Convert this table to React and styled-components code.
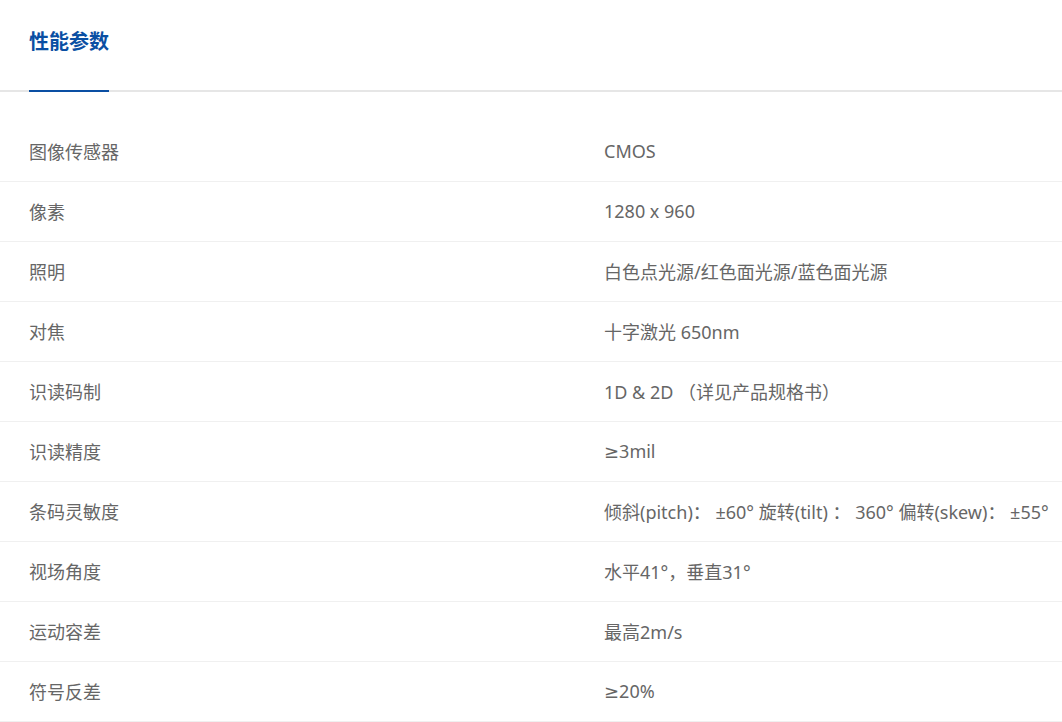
import styled, { createGlobalStyle } from "styled-components";

const GlobalStyle = createGlobalStyle`
  body {
    margin: 0;
    background: #fff;
    font-family: "Noto Sans", "DejaVu Sans", "Noto Sans CJK SC", sans-serif;
  }
`;

const specs = [
  ["图像传感器", "CMOS"],
  ["像素", "1280 x 960"],
  ["照明", "白色点光源/红色面光源/蓝色面光源"],
  ["对焦", "十字激光 650nm"],
  ["识读码制", "1D & 2D （详见产品规格书）"],
  ["识读精度", "≥3mil"],
  ["条码灵敏度", "倾斜(pitch)： ±60° 旋转(tilt) ： 360° 偏转(skew)： ±55°"],
  ["视场角度", "水平41°，垂直31°"],
  ["运动容差", "最高2m/s"],
  ["符号反差", "≥20%"],
];

const App = () => {
  return (
    <Page>
      <GlobalStyle />
      <TabBar>
        <Tab>性能参数</Tab>
      </TabBar>
      <Table>
        {specs.map(([name, value]) => (
          <Row key={name}>
            <Cell>{name}</Cell>
            <Cell>{value}</Cell>
          </Row>
        ))}
      </Table>
    </Page>
  );
};

const Page = styled.div`
  width: 1062px;
  overflow: hidden;
`;

const TabBar = styled.div`
  display: flex;
  padding: 0 29px;
  height: 90px;
  border-bottom: 2px solid #e6e6e6;
`;

const Tab = styled.div`
  display: flex;
  align-items: center;
  padding-bottom: 10px;
  margin-bottom: -2px;
  border-bottom: 2px solid #0a4fa3;
  font-family: "Noto Sans CJK SC", sans-serif;
  font-size: 20px;
  font-weight: 700;
  color: #0a4fa3;
  white-space: nowrap;
`;

const Table = styled.div`
  padding-top: 30px;
`;

const Row = styled.div`
  display: grid;
  grid-template-columns: 575px 1fr;
  height: 59px;
  box-sizing: border-box;
  height: 60px;
  align-items: center;
  padding: 0 0 2px 29px;
  border-bottom: 1px solid #f0f0f0;
`;

const Cell = styled.div`
  font-size: 18px;
  color: #666;
  white-space: nowrap;
`;

export default App;
